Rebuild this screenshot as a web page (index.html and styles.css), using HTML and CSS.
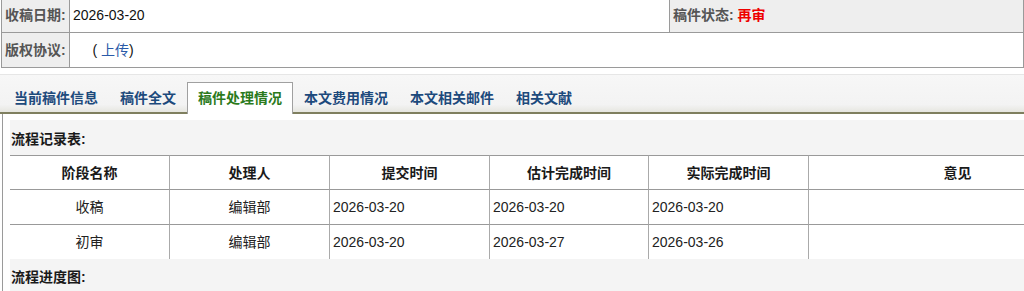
FILE: index.html
```html
<!DOCTYPE html>
<html lang="zh-CN">
<head>
<meta charset="utf-8">
<title>稿件处理情况</title>
<link rel="stylesheet" href="styles.css">
</head>
<body>
<div class="page">
  <table class="info">
    <tr class="r1">
      <td class="lbl">收稿日期:</td>
      <td class="val">2026-03-20</td>
      <td class="lbl status">稿件状态: <span class="red">再审</span></td>
    </tr>
    <tr class="r2">
      <td class="lbl">版权协议:</td>
      <td class="val" colspan="2">&nbsp;&nbsp;&nbsp;&nbsp;&nbsp;( <a class="link" href="#">上传</a>)</td>
    </tr>
  </table>

  <div class="tabbar">
    <ul class="tabs">
      <li class="tab">当前稿件信息</li>
      <li class="tab">稿件全文</li>
      <li class="tab active">稿件处理情况</li>
      <li class="tab">本文费用情况</li>
      <li class="tab">本文相关邮件</li>
      <li class="tab">相关文献</li>
    </ul>
  </div>

  <div class="panel">
    <div class="section-title">流程记录表:</div>
    <table class="flow">
      <tr>
        <th class="c1">阶段名称</th>
        <th class="c2">处理人</th>
        <th class="c3">提交时间</th>
        <th class="c4">估计完成时间</th>
        <th class="c5">实际完成时间</th>
        <th class="c6">意见</th>
      </tr>
      <tr>
        <td class="ctr">收稿</td>
        <td class="ctr">编辑部</td>
        <td>2026-03-20</td>
        <td>2026-03-20</td>
        <td>2026-03-20</td>
        <td></td>
      </tr>
      <tr>
        <td class="ctr">初审</td>
        <td class="ctr">编辑部</td>
        <td>2026-03-20</td>
        <td>2026-03-27</td>
        <td>2026-03-26</td>
        <td></td>
      </tr>
    </table>
    <div class="section-title second">流程进度图:</div>
  </div>
</div>
</body>
</html>
```
FILE: styles.css
```css
html, body {
  margin: 0;
  padding: 0;
  background: #ffffff;
  overflow: hidden;
}

body {
  font-family: "Liberation Sans", "Noto Sans CJK SC", sans-serif;
  font-size: 14px;
  color: #222;
}

.page {
  width: 1024px;
  overflow: hidden;
}

/* top info table */
.info {
  width: 1023px;
  margin-left: 1px;
  border-collapse: collapse;
  table-layout: fixed;
}

.info td {
  border: 1px solid #9a9a9a;
  padding: 0;
  white-space: nowrap;
}

.info tr.r1 td {
  border-top: none;
  line-height: 30px;
  height: 30px;
  padding-bottom: 2px;
}

.info tr.r2 td {
  line-height: 34px;
  height: 34px;
}

.info .lbl {
  width: 64px;
  padding-left: 3px;
  background: #eeeeee;
  color: #555;
  font-weight: bold;
}

.info .val {
  padding-left: 3px;
  color: #111;
}

.info .status {
  width: 350px;
}

.red {
  color: #ee0000;
}

.link {
  color: #2a5aa8;
  text-decoration: none;
}

/* tab bar */
.tabbar {
  margin-top: 6px;
  height: 37px;
  border-top: 1px solid #e6e6e6;
  border-bottom: 2px solid #7f7f5f;
  background: linear-gradient(#f7f7f7, #f3f3f3 80%, #e6e6e0);
  display: flex;
  align-items: flex-end;
}

.tabs {
  list-style: none;
  margin: 0 0 -2px 0;
  padding: 0 0 0 3px;
  display: flex;
  align-items: flex-end;
}

.tab {
  padding: 0 10px;
  height: 31px;
  line-height: 31px;
  border: 1px solid transparent;
  border-bottom: none;
  font-weight: bold;
  color: #1d4a7c;
  white-space: nowrap;
}

.tab.active {
  background: #ffffff;
  border-color: #a0a0a0;
  color: #2b7a1c;
}

/* panel */
.panel {
  margin-left: 2px;
  border-left: 1px solid #9a9a9a;
  padding: 6px 0 0 7px;
  background: #ffffff;
  overflow: hidden;
}

.section-title {
  background: #f4f4f4;
  padding: 4px 0 0 1px;
  height: 31px;
  line-height: 31px;
  font-weight: bold;
  color: #1a1a1a;
  width: 1100px;
}

.section-title.second {
  padding-top: 3px;
  height: 40px;
}

.flow {
  border-collapse: separate;
  border-spacing: 0;
  table-layout: fixed;
  width: 1096px;
  background: #ffffff;
}

.flow th,
.flow td {
  box-sizing: border-box;
  border-top: 1px solid #999;
  border-left: 1px solid #aaa;
  padding: 0 0 0 3px;
  white-space: nowrap;
}

.flow th:first-child,
.flow td:first-child {
  border-left: none;
}

.flow th {
  height: 34px;
  line-height: 32px;
  padding: 1px 0 0 0;
  font-weight: bold;
  text-align: center;
  color: #1a1a1a;
}

.flow td {
  height: 35px;
  line-height: 34px;
  color: #222;
}

.flow td.ctr {
  text-align: center;
  padding-left: 0;
}

.flow .c1 { width: 159px; }
.flow .c2 { width: 160px; }
.flow .c3 { width: 160px; }
.flow .c4 { width: 159px; }
.flow .c5 { width: 160px; }
.flow .c6 { width: 298px; }
```
